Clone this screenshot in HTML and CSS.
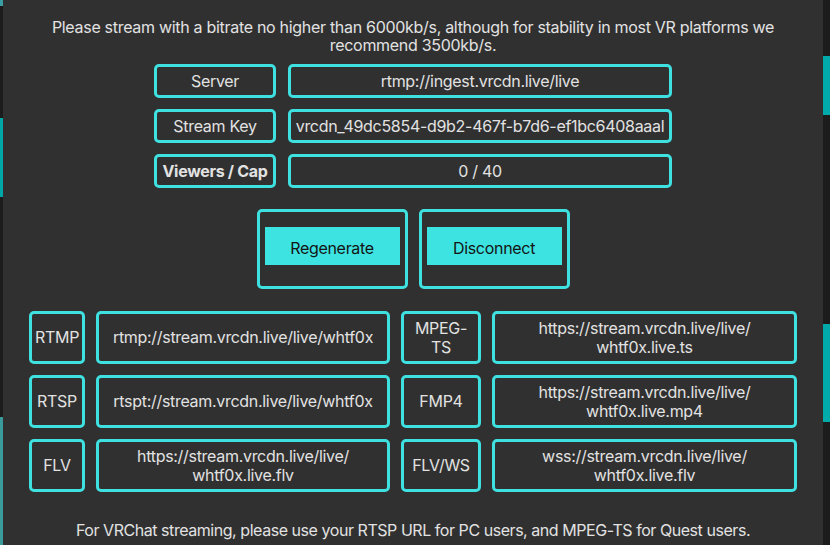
FILE: index.html
```html
<!DOCTYPE html>
<html lang="en">
<head>
<meta charset="utf-8">
<title>Stream settings</title>
<link rel="stylesheet" href="styles.css">
</head>
<body>
<div class="edge edge-left"></div>
<main class="panel">
  <p class="intro">Please stream with a bitrate no higher than 6000kb/s, although for stability in most VR platforms we recommend 3500kb/s.</p>

  <div class="keys">
    <div class="cell label"><span>Server</span></div>
    <div class="cell value"><span>rtmp://ingest.vrcdn.live/live</span></div>
    <div class="cell label"><span>Stream Key</span></div>
    <div class="cell value"><span>vrcdn_49dc5854-d9b2-467f-b7d6-ef1bc6408aaal</span></div>
    <div class="cell label strong"><span>Viewers / Cap</span></div>
    <div class="cell value"><span>0 / 40</span></div>
  </div>

  <div class="actions">
    <div class="action-box"><button class="btn" type="button">Regenerate</button></div>
    <div class="action-box"><button class="btn" type="button">Disconnect</button></div>
  </div>

  <div class="streams">
    <div class="cell"><span>RTMP</span></div>
    <div class="cell"><span>rtmp://stream.vrcdn.live/live/whtf0x</span></div>
    <div class="cell"><span>MPEG-<wbr>TS</span></div>
    <div class="cell"><span><span class="nw">https://stream.vrcdn.live/live/</span><wbr><span class="nw">whtf0x.live.ts</span></span></div>

    <div class="cell"><span>RTSP</span></div>
    <div class="cell"><span>rtspt://stream.vrcdn.live/live/whtf0x</span></div>
    <div class="cell"><span>FMP4</span></div>
    <div class="cell"><span><span class="nw">https://stream.vrcdn.live/live/</span><wbr><span class="nw">whtf0x.live.mp4</span></span></div>

    <div class="cell"><span>FLV</span></div>
    <div class="cell"><span><span class="nw">https://stream.vrcdn.live/live/</span><wbr><span class="nw">whtf0x.live.flv</span></span></div>
    <div class="cell"><span>FLV/WS</span></div>
    <div class="cell"><span><span class="nw">wss://stream.vrcdn.live/live/</span><wbr><span class="nw">whtf0x.live.flv</span></span></div>
  </div>

  <p class="footer">For VRChat streaming, please use your RTSP URL for PC users, and MPEG-TS for Quest users.</p>
</main>
<div class="edge edge-right"></div>
</body>
</html>
```

FILE: styles.css
```css
* { box-sizing: border-box; }

html, body {
  margin: 0;
  height: 545px;
  overflow: hidden;
  background: #1c1c1c;
}

body {
  display: flex;
  font-family: Inter, "Noto Sans", sans-serif;
  font-size: 16px;
  letter-spacing: -0.3px;
  color: #e2e2e2;
}

.edge { flex: none; height: 545px; }

.edge-left {
  width: 3px;
  background: linear-gradient(to bottom,
    #3a9ea3 0, #3a9ea3 6px,
    #1c1c1c 6px, #1c1c1c 118px,
    #00a7a7 118px, #00a7a7 197px,
    #1c1c1c 197px, #1c1c1c 417px,
    #3a9a9c 417px, #3a9a9c 545px);
}

.edge-right {
  width: 7px;
  background: linear-gradient(to bottom,
    #1c1c1c 0, #1c1c1c 56px,
    #00aaaa 56px, #00aaaa 115px,
    #1c1c1c 115px, #1c1c1c 324px,
    #00aaaa 324px, #00aaaa 422px,
    #1c1c1c 422px);
}

.panel {
  flex: none;
  width: 820px;
  height: 545px;
  background: #303030;
  display: flex;
  flex-direction: column;
  align-items: center;
  padding-top: 18px;
}

.intro {
  margin: 0;
  width: 740px;
  text-align: center;
  line-height: 18px;
}

.cell {
  border: 3px solid #3ee0e0;
  border-radius: 5px;
  display: flex;
  align-items: center;
  justify-content: center;
  text-align: center;
  line-height: 19px;
}

.keys {
  margin-top: 10px;
  display: grid;
  grid-template-columns: 122px 384px;
  grid-auto-rows: 34px;
  column-gap: 12px;
  row-gap: 11px;
}

.keys .cell { padding-top: 1px; }

.strong { font-weight: 700; }

.value { white-space: nowrap; overflow: hidden; }

.actions {
  margin-top: 21px;
  display: flex;
  gap: 11px;
}

.action-box {
  width: 151px;
  height: 80px;
  border: 3px solid #3ee0e0;
  border-radius: 5px;
  padding: 15px 5px 0 5px;
}

.btn {
  display: block;
  width: 100%;
  height: 38px;
  border: none;
  border-radius: 0;
  background: #3de3e1;
  color: #141414;
  font: inherit;
  letter-spacing: inherit;
  padding: 3px 0 0;
}

.streams {
  margin-top: 22px;
  display: grid;
  grid-template-columns: 56px 294px 80px 305px;
  grid-auto-rows: 53px;
  column-gap: 11px;
  row-gap: 11px;
}

.streams .cell { padding: 0 6px; }

.nw { white-space: nowrap; }

.footer {
  margin: 29px 0 0;
  line-height: 18px;
  text-align: center;
  letter-spacing: -0.45px;
}
```
